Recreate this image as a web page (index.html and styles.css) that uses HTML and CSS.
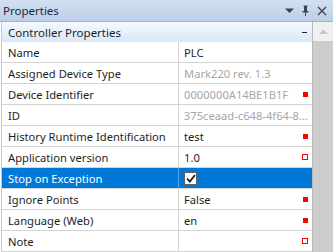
FILE: index.html
```html
<!DOCTYPE html>
<html lang="en">
<head>
    <meta charset="UTF-8">
    <title>Properties</title>
    <link rel="stylesheet" href="styles.css">
</head>
<body>
    <div class="panel">
        <div class="titlebar">
            <span class="title">Properties</span>
            <span class="tools">
                <svg width="9" height="9" viewBox="0 0 9 9"><path d="M0 2.5h9L4.5 7z" fill="#3c4450"/></svg>
                <svg width="9" height="11" viewBox="0 0 9 11"><path d="M2.5 0.5h4v1h-0.5v4.5h1.5v1.5h-6v-1.5h1.5v-4.5h-0.5zM4 7h1v4h-1z" fill="#3c4450"/></svg>
                <svg width="10" height="10" viewBox="0 0 10 10"><path d="M1 1l8 8M9 1l-8 8" stroke="#3c4450" stroke-width="1.4"/></svg>
            </span>
        </div>
        <div class="body">
            <div class="grid">
                <div class="category">
                    <span>Controller Properties</span>
                    <span class="collapse"></span>
                </div>
                <div class="row"><div class="name">Name</div><div class="value">PLC</div></div>
                <div class="row"><div class="name">Assigned Device Type</div><div class="value readonly">Mark220 rev. 1.3</div></div>
                <div class="row"><div class="name">Device Identifier</div><div class="value readonly">0000000A14BE1B1F<span class="mark"></span></div></div>
                <div class="row"><div class="name">ID</div><div class="value readonly">375ceaad-c648-4f64-8...</div></div>
                <div class="row"><div class="name">History Runtime Identification</div><div class="value">test<span class="mark"></span></div></div>
                <div class="row"><div class="name">Application version</div><div class="value">1.0<span class="mark empty"></span></div></div>
                <div class="row selected"><div class="name">Stop on Exception</div><div class="value"><span class="checkbox"><svg width="10" height="9" viewBox="0 0 10 9"><path d="M1 4.5l2.8 3L9 1" fill="none" stroke="#1a1a1a" stroke-width="1.8"/></svg></span></div></div>
                <div class="row"><div class="name">Ignore Points</div><div class="value">False<span class="mark"></span></div></div>
                <div class="row"><div class="name">Language (Web)</div><div class="value">en<span class="mark"></span></div></div>
                <div class="row"><div class="name">Note</div><div class="value"><span class="mark empty"></span></div></div>
            </div>
            <div class="scrollbar">
                <div class="arrow">
                    <svg width="9" height="5" viewBox="0 0 9 5"><path d="M0 5L4.5 0.5L9 5z" fill="#c4c4c4"/></svg>
                </div>
                <div class="track"></div>
            </div>
        </div>
    </div>
</body>
</html>
```

FILE: styles.css
```css
body {
    margin: 0;
    font-family: "Noto Sans", "Open Sans", sans-serif;
    font-size: 11.2px;
    color: #1e1e1e;
    background-color: #ffffff;
}
.panel {
    width: 333px;
    height: 252px;
    display: flex;
    flex-direction: column;
    overflow: hidden;
}
.titlebar {
    height: 21px;
    border-bottom: 1px solid #9fb2cc;
    background: linear-gradient(#d3e0f1, #bccfe8);
    display: flex;
    align-items: center;
    justify-content: space-between;
    padding: 0 6px 0 3px;
    font-size: 11.5px;
    color: #1e2838;
}
.tools {
    display: flex;
    align-items: center;
    gap: 7px;
}
.tools svg {
    display: block;
}
.body {
    flex: 1;
    display: flex;
}
.grid {
    width: 312px;
    border-right: 1px solid #b8b8b8;
    border-left: 1px solid #c8c8c8;
    box-sizing: border-box;
    margin-left: 1px;
}
.category {
    height: 20px;
    background: linear-gradient(#f5f9fe, #d9e7f8);
    display: flex;
    align-items: center;
    justify-content: space-between;
    padding: 0 5px 0 6px;
    font-size: 11.5px;
}
.collapse {
    width: 5px;
    height: 1px;
    background-color: #222222;
}
.row {
    height: 20px;
    border-bottom: 1px solid #d4d4d4;
    display: flex;
}
.name {
    width: 170px;
    border-right: 1px solid #d4d4d4;
    padding-left: 6px;
    display: flex;
    align-items: center;
    white-space: nowrap;
    overflow: hidden;
}
.value {
    flex: 1;
    padding: 0 4px 0 5px;
    display: flex;
    align-items: center;
    justify-content: space-between;
    white-space: nowrap;
}
.readonly {
    color: #a6a6a6;
}
.mark {
    width: 5px;
    height: 5px;
    background-color: #ff0000;
    margin-left: auto;
}
.mark.empty {
    width: 6px;
    height: 6px;
    box-sizing: border-box;
    background-color: #ffffff;
    border: 1px solid #ff0000;
}
.selected {
    background-color: #0078d7;
    color: #ffffff;
}
.selected .name {
    border-right-color: #5aa3e6;
}
.checkbox {
    width: 11px;
    height: 11px;
    border: 1px solid #606060;
    background-color: #ffffff;
    display: flex;
    align-items: center;
    justify-content: center;
}
.scrollbar {
    flex: 1;
    display: flex;
    flex-direction: column;
}
.arrow {
    height: 19px;
    background-color: #f0f0f0;
    display: flex;
    align-items: center;
    justify-content: center;
}
.track {
    flex: 1;
    background-color: #cdcdcd;
}
```
